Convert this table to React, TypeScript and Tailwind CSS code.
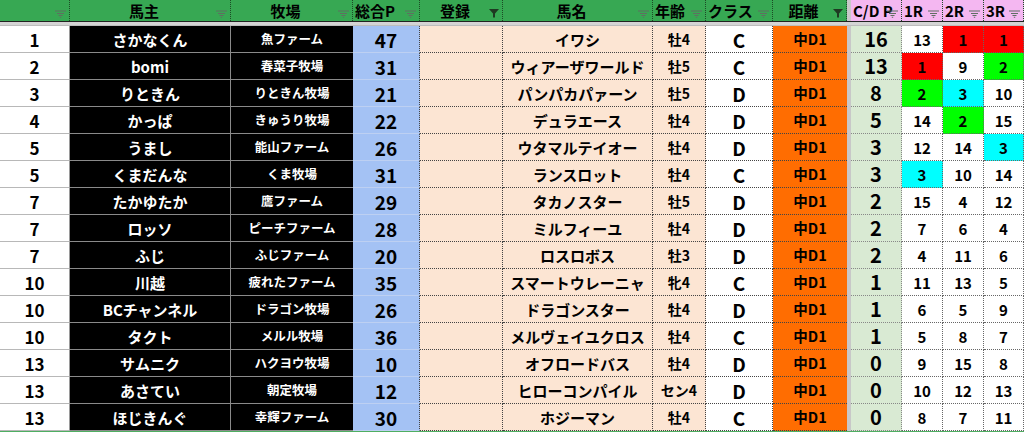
import React from "react";

type Row = {
  rank: number;
  owner: string;
  farm: string;
  total: number;
  horse: string;
  age: string;
  cls: string;
  cd: number;
  r: [number, number, number];
};

const rows: Row[] = [
  { rank: 1, owner: "さかなくん", farm: "魚ファーム", total: 47, horse: "イワシ", age: "牡4", cls: "C", cd: 16, r: [13, 1, 1] },
  { rank: 2, owner: "bomi", farm: "春菜子牧場", total: 31, horse: "ウィアーザワールド", age: "牡5", cls: "C", cd: 13, r: [1, 9, 2] },
  { rank: 3, owner: "りときん", farm: "りときん牧場", total: 21, horse: "パンパカパァーン", age: "牡5", cls: "D", cd: 8, r: [2, 3, 10] },
  { rank: 4, owner: "かっぱ", farm: "きゅうり牧場", total: 22, horse: "デュラエース", age: "牡4", cls: "D", cd: 5, r: [14, 2, 15] },
  { rank: 5, owner: "うまし", farm: "能山ファーム", total: 26, horse: "ウタマルテイオー", age: "牡4", cls: "D", cd: 3, r: [12, 14, 3] },
  { rank: 5, owner: "くまだんな", farm: "くま牧場", total: 31, horse: "ランスロット", age: "牡4", cls: "C", cd: 3, r: [3, 10, 14] },
  { rank: 7, owner: "たかゆたか", farm: "鷹ファーム", total: 29, horse: "タカノスター", age: "牡5", cls: "D", cd: 2, r: [15, 4, 12] },
  { rank: 7, owner: "ロッソ", farm: "ピーチファーム", total: 28, horse: "ミルフィーユ", age: "牡4", cls: "D", cd: 2, r: [7, 6, 4] },
  { rank: 7, owner: "ふじ", farm: "ふじファーム", total: 20, horse: "ロスロボス", age: "牡3", cls: "D", cd: 2, r: [4, 11, 6] },
  { rank: 10, owner: "川越", farm: "疲れたファーム", total: 35, horse: "スマートウレーニャ", age: "牝4", cls: "C", cd: 1, r: [11, 13, 5] },
  { rank: 10, owner: "BCチャンネル", farm: "ドラゴン牧場", total: 26, horse: "ドラゴンスター", age: "牡4", cls: "D", cd: 1, r: [6, 5, 9] },
  { rank: 10, owner: "タクト", farm: "メルル牧場", total: 36, horse: "メルヴェイユクロス", age: "牡4", cls: "C", cd: 1, r: [5, 8, 7] },
  { rank: 13, owner: "サムニク", farm: "ハクヨウ牧場", total: 10, horse: "オフロードバス", age: "牡4", cls: "D", cd: 0, r: [9, 15, 8] },
  { rank: 13, owner: "あさてい", farm: "朝定牧場", total: 12, horse: "ヒローコンパイル", age: "セン4", cls: "D", cd: 0, r: [10, 12, 13] },
  { rank: 13, owner: "ほじきんぐ", farm: "幸輝ファーム", total: 30, horse: "ホジーマン", age: "牡4", cls: "C", cd: 0, r: [8, 7, 11] },
];

const cols =
  "grid grid-cols-[70px_161px_122px_67px_83px_150px_53px_67px_74px_4px_51px_41px_41px_40px]";

// result cell colour: 1 red, 2 green, 3 cyan
const placeBg = (n: number) =>
  n === 1 ? "bg-[#ff0000]" : n === 2 ? "bg-[#00ff00]" : n === 3 ? "bg-[#00ffff]" : "bg-white";

// shared cell borders
const dotted = "[border-bottom:1px_dotted_#444] [border-right:1px_dotted_#444]";

const FilterIcon = ({ active }: { active?: boolean }) =>
  active ? (
    <svg width="10" height="10" viewBox="0 0 10 10" className="absolute right-[3px] bottom-[3px]">
      <path d="M0 1 H10 L6 5.5 V9.5 H4 V5.5 Z" fill="#1f3a22" />
    </svg>
  ) : (
    <svg width="11" height="8" viewBox="0 0 11 8" className="absolute right-[3px] bottom-[3px]">
      <path d="M0 1 H11 M2 3.5 H9 M3.5 5.5 H7.5 M4.8 7.3 H6.2" stroke="#5f6f62" strokeWidth="1.1" />
    </svg>
  );

const Head = ({
  label,
  pink,
  active,
  align = "center",
}: {
  label: string;
  pink?: boolean;
  active?: boolean;
  align?: "center" | "left";
}) => (
  <div
    className={`relative flex items-center h-full [border-right:1px_dotted_#1d4a26] text-[15px] font-bold text-black ${
      pink ? "bg-[#f4b7f1]" : "bg-[#37a853]"
    } ${align === "left" ? "justify-start pl-[2px]" : "justify-center pr-3"}`}
  >
    <span className="leading-none">{label}</span>
    <FilterIcon active={active} />
  </div>
);

const App = () => {
  return (
    <div className="w-[1024px] h-[432px] overflow-hidden bg-white leading-none font-['Noto_Sans_CJK_JP','Noto_Sans',sans-serif]">
      {/* header row */}
      <div className={`${cols} grid-rows-[21px] h-[22px] [border-bottom:1px_solid_#222]`}>
        <Head label="" />
        <Head label="馬主" />
        <Head label="牧場" />
        <Head label="総合P" align="left" />
        <Head label="登録" active />
        <Head label="馬名" />
        <Head label="年齢" align="left" />
        <Head label="クラス" align="left" />
        <Head label="距離" active />
        <div className="bg-[#c8c8c8]" />
        <Head label="C/D P" pink align="left" />
        <Head label="1R" pink align="left" />
        <Head label="2R" pink align="left" />
        <Head label="3R" pink align="left" />
      </div>
      <div className="h-[4px] bg-[#d4d4d4] [border-bottom:1px_solid_#bdbdbd]" />

      {/* body */}
      {rows.map((row, i) => (
        <div key={i} className={`${cols} grid-rows-[27px] h-[27px] leading-none text-black`}>
          <div className="flex items-center justify-center bg-white [border-bottom:1px_solid_#b8b8b8] [border-right:1px_solid_#9a9a9a] text-[17px] font-bold">
            {row.rank}
          </div>
          <div className="flex items-center justify-center bg-black [border-bottom:1px_solid_#8a8a8a] [border-right:1px_solid_#8a8a8a] text-white text-[15px] font-bold">
            {row.owner}
          </div>
          <div className="flex items-center justify-center bg-black [border-bottom:1px_solid_#8a8a8a] text-white text-[12.5px] font-bold">
            {row.farm}
          </div>
          <div className="flex items-center justify-center bg-[#a4c2f4] [border-bottom:1px_solid_#bdd0f2] [border-right:1px_dotted_#444] text-[19px] font-bold">
            {row.total}
          </div>
          <div className={`bg-[#fce5d3] ${dotted}`} />
          <div className={`flex items-center justify-center bg-[#fce5d3] ${dotted} text-[15px] font-bold whitespace-nowrap`}>
            {row.horse}
          </div>
          <div className={`flex items-center justify-center bg-[#fce5d3] ${dotted} text-[14px] font-bold whitespace-nowrap`}>
            {row.age}
          </div>
          <div className={`flex items-center justify-center bg-white ${dotted} text-[19px] font-bold`}>
            {row.cls}
          </div>
          <div className="flex items-center justify-center bg-[#ff6d01] [border-bottom:1px_dotted_#444] text-[14.5px] font-bold">
            中D1
          </div>
          <div className="bg-[#c8c8c8]" />
          <div className="flex items-center justify-center bg-[#d9ead3] [border-bottom:1px_dotted_#888] [border-right:1px_dotted_#888] text-[20px] font-bold">
            {row.cd}
          </div>
          {row.r.map((n, j) => (
            <div
              key={j}
              className={`flex items-center justify-center [border-bottom:1px_dotted_#666] [border-right:1px_dotted_#666] text-[15px] font-semibold ${placeBg(n)}`}
            >
              {n}
            </div>
          ))}
        </div>
      ))}
      <div className="h-[2px] bg-[#4fae62]" />
    </div>
  );
};

export default App;
